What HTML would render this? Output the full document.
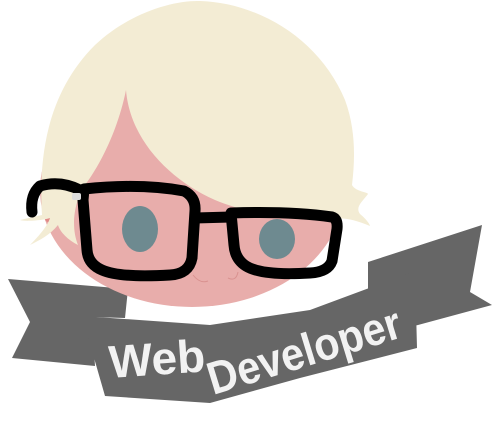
<!DOCTYPE html>
<html><head><meta charset="utf-8"><style>
html,body{margin:0;padding:0;background:#fff;width:500px;height:429px;overflow:hidden}
svg{display:block}
</style></head><body>
<svg width="500" height="429" viewBox="0 0 500 429" xmlns="http://www.w3.org/2000/svg">
<path d="M8,279 L128,289 L125,318 L92,317 L95,366 L12,358 L30,322 Z" fill="#666"/>
<path d="M368,262 L482,225 L470,292 L492,305 L418,325 L368,336 Z" fill="#666"/>
<ellipse cx="192" cy="190" rx="152" ry="117" fill="#e8adab"/>
<ellipse cx="48" cy="215" rx="4" ry="7" fill="#e08a88"/>
<path d="M42,215 C38,150 50,90 95,45 C130,12 175,0 200,1 C260,3 320,40 345,100 C356,130 355,160 352,185 C356,192 368,192 368,194 C362,202 355,207 360,214 C365,218 370,224 370,226 C355,220 345,217 330,219 C300,220 250,215 215,200 C170,180 130,140 126,90 C118,130 100,165 85,185 C75,200 70,225 78,245 C68,240 60,232 58,225 C50,235 40,240 30,245 C40,235 48,225 50,218 C45,220 25,222 20,220 Z" fill="#f3ecd4"/>
<ellipse cx="140" cy="229" rx="18" ry="23" fill="#6e8a90"/>
<ellipse cx="277" cy="239" rx="18" ry="20" fill="#6e8a90"/>
<g fill="none" stroke="#000" stroke-width="11" stroke-linejoin="round" stroke-linecap="round">
<path d="M84,189 Q140,183 184,191 Q196,197 195,211 L192,258 Q189,274 170,275 Q120,278 102,270 Q88,264 87,250 L83,200 Z"/>
<path d="M231,213 Q290,211 332,217 Q338,219 337,229 L332,261 Q328,272 310,273 Q262,276 246,266 Q235,259 234,245 Z"/>
<path d="M195,218 L231,217"/>
<path d="M80,190 Q60,180 40,186 Q30,195 32,212"/>
</g>
<rect x="72" y="193" width="9" height="7" rx="2" fill="#ddd"/>
<path d="M193,275 Q200,284 208,281 M228,278 Q236,282 238,272" stroke="#d99290" stroke-width="1" fill="none"/>
<path d="M82,316 L210,325 L310,310 L415,271 L417,348 L300,378 L210,403 L105,396 Z" fill="#666"/>
<g fill="#f2f2f2" font-family="'Liberation Sans',sans-serif" font-weight="bold">
<text x="110" y="378" font-size="46" transform="rotate(-4 110 378)">Web</text>
<text x="213" y="395" font-size="46" transform="rotate(-17 213 395)" textLength="200" lengthAdjust="spacingAndGlyphs">Developer</text>
</g>
</svg>
</body></html>
